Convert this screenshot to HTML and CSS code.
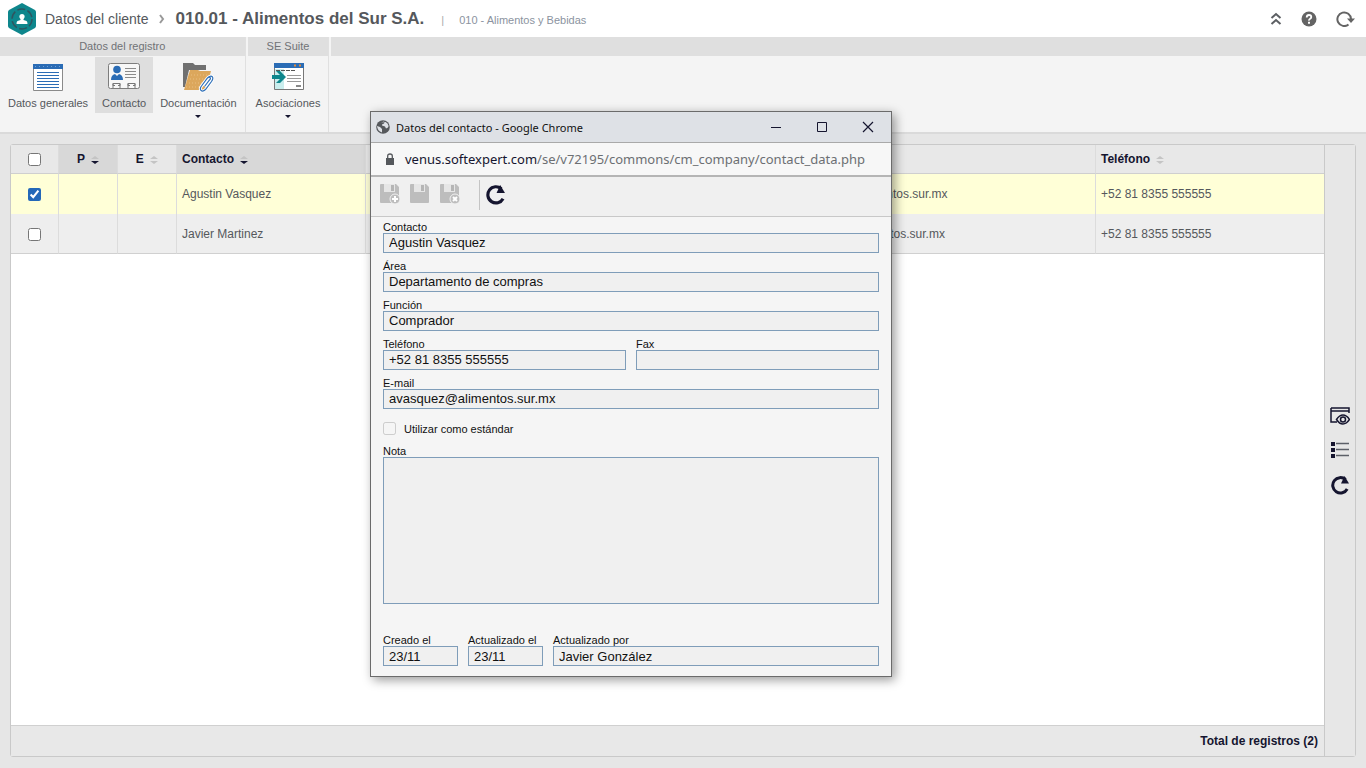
FILE: index.html
```html
<!DOCTYPE html>
<html lang="es">
<head>
    <meta charset="UTF-8">
    <meta name="viewport" content="width=device-width, initial-scale=1.0">
    <title>Datos del cliente</title>
    <link rel="stylesheet" href="styles.css">
</head>
<body>
    <svg class="symbols" aria-hidden="true">
        <symbol id="reload" viewBox="0 0 20 20">
            <path d="M15.6 4.600A7.700 7.700 0 1 0 17.200 14" fill="none" stroke="currentColor" stroke-width="3"/>
            <path d="M14.500 1l4.500 7.600h-8z" fill="currentColor"/>
        </symbol>
        <symbol id="sort" viewBox="0 0 8 8">
            <path d="M4 0l4 3H0z" fill="#c4c4c4"/>
            <path d="M0 5h8L4 8z" fill="currentColor"/>
        </symbol>
        <symbol id="floppy" viewBox="0 0 20 20">
            <path d="M1 0h15l3 3v15q0 1-1 1H1q-1 0-1-1V1q0-1 1-1z" fill="#bdbdbd"/>
            <path d="M4 0h11v8H4z" fill="#e6e6e6"/>
            <path d="M11 1h3v6h-3z" fill="#b5b5b5"/>
        </symbol>
    </svg>
    <div class="page">
        <header class="topbar">
            <svg class="logo" viewBox="0 0 30 34">
                <path d="M15 1l13 7q1 1 1 2v14q0 1-1 2l-13 7-13-7q-1-1-1-2V10q0-1 1-2z" fill="#0e868c"/>
                <circle cx="15" cy="17" r="10" fill="none" stroke="#2f5560" stroke-width="1.5" stroke-dasharray="8 2.5"/>
                <circle cx="15" cy="14.500" r="2.600" fill="#fff"/>
                <path d="M13.500 16h3v2l3 1q1 .5 1 3h-11q0-2.500 1-3l3-1z" fill="#fff"/>
            </svg>
            <span class="crumb">Datos del cliente</span>
            <svg class="arrow" viewBox="0 0 6 10"><path d="M1 1l3 4-3 4" fill="none" stroke="#999" stroke-width="2"/></svg>
            <h1>010.01 - Alimentos del Sur S.A.</h1>
            <span class="sep">|</span>
            <span class="category">010 - Alimentos y Bebidas</span>
            <div class="tools">
                <button type="button" aria-label="Contraer">
                    <svg width="12" height="14" viewBox="0 0 12 14"><path d="M1.500 6L6 2l4.500 4M1.500 12L6 8l4.500 4" fill="none" stroke="#5c5f63" stroke-width="2"/></svg>
                </button>
                <button type="button" aria-label="Ayuda">
                    <svg width="16" height="16" viewBox="0 0 16 16"><circle cx="8" cy="8" r="7.500" fill="#646464"/><path d="M5.700 6.500q0-2.500 2.300-2.500t2.300 2.100q0 1-1.200 1.700T8 9.600" fill="none" stroke="#fff" stroke-width="1.800"/><path d="M7 10.700h2v2H7z" fill="#fff"/></svg>
                </button>
                <button type="button" aria-label="Actualizar">
                    <svg width="19" height="16" viewBox="0 0 19 16"><path d="M12.500 13.500A6.800 6.800 0 1 1 15 8" fill="none" stroke="#646464" stroke-width="2"/><path d="M11 7.500h8l-4 4.500z" fill="#646464"/></svg>
                </button>
            </div>
        </header>

        <nav class="ribbon">
            <section class="group">
                <h2>Datos del registro</h2>
                <div class="items">
                    <button type="button" class="item">
                        <svg viewBox="0 0 32 32"><path d="M1.500 3.500h29v26h-29z" fill="#fff" stroke="#8a8a8a"/><path d="M1 3h30v5H1z" fill="#2a6cb5"/><path d="M3 5.500h26" stroke="#6fa0d6" stroke-dasharray="1 3"/><path d="M5 11.500h22M5 14.500h22M5 17.500h22M5 20.500h22M5 23.500h22M5 26.500h22" stroke="#2a6cb5"/></svg>
                        <span>Datos generales</span>
                    </button>
                    <button type="button" class="item active">
                        <svg viewBox="0 0 32 32"><path d="M2.500 2.500h27q2 0 2 2v21q0 2-2 2h-27q-2 0-2-2v-21q0-2 2-2z" fill="#f7f7f7" stroke="#7d7d7d"/><circle cx="9" cy="8.500" r="3.800" fill="#2a6cb5"/><path d="M3 19q0-5 4-6l2 2 2-2q4 1 4 6z" fill="#2a6cb5"/><path d="M17 7.500h11M17 10.500h11M17 13.500h11M17 16.500h11" stroke="#8a8a8a"/><path d="M5 27.500v-5h7v5M20 27.500v-5h7v5M5 22.500v2h2M12 22.500v2h-2M20 22.500v2h2M27 22.500v2h-2" fill="none" stroke="#777"/></svg>
                        <span>Contacto</span>
                    </button>
                    <button type="button" class="item">
                        <svg viewBox="0 0 32 32"><path d="M1 2h10l2 2h11v5H7L3 26H1z" fill="#707070"/><path d="M8 9h8l2 1h11l-5 19H2z" fill="#dca75c"/><path d="M6 14h20M5 18h18M4 22h18M4 26h17" stroke="#e9be80" stroke-dasharray="1 2"/><path d="M19.500 25l6-8q3-3 5-1 1 1.500-1 4.500l-6 8q-2.500 2.500-4.500 1-1.500-2 .5-4.500l6-8q1.500-1.500 2.500-.5t-.5 2.500l-5 6.500" fill="none" stroke="#fff" stroke-width="3"/><path d="M19.500 25l6-8q3-3 5-1 1 1.500-1 4.500l-6 8q-2.500 2.500-4.500 1-1.500-2 .5-4.500l6-8q1.500-1.500 2.500-.5t-.5 2.500l-5 6.500" fill="none" stroke="#2f70b8" stroke-width="1.200"/></svg>
                        <span>Documentación</span>
                        <i class="caret"></i>
                    </button>
                </div>
            </section>
            <section class="group">
                <h2>SE Suite</h2>
                <div class="items">
                    <button type="button" class="item">
                        <svg viewBox="0 0 32 32"><path d="M2.500 2.500h29v26h-29z" fill="#fff" stroke="#777"/><path d="M3 8h9v20H3z" fill="#c9eded"/><path d="M2 2h30v5H2z" fill="#2a6cb5"/><path d="M22 4.500h2M27 4.500h2" stroke="#e08a3c" stroke-width="2"/><path d="M4 9.500h19" stroke="#555" stroke-dasharray="4 1"/><path d="M15 14.500h14M15 17.500h14M15 20.500h14" stroke="#999"/><path d="M24 25h5" stroke="#888" stroke-width="2"/><path d="M0 14h8l-4-4h4l6 6-6 6H4l4-4H0z" fill="#0e868c"/></svg>
                        <span>Asociaciones</span>
                        <i class="caret"></i>
                    </button>
                </div>
            </section>
            <div class="rest"></div>
        </nav>

        <main class="panel">
            <div class="grid">
                <table>
                    <colgroup>
                        <col class="col-check">
                        <col class="col-flag">
                        <col class="col-flag">
                        <col class="col-name">
                        <col class="col-area">
                        <col>
                        <col class="col-phone">
                    </colgroup>
                    <thead>
                        <tr>
                            <th class="center"><input type="checkbox" aria-label="Seleccionar todos"></th>
                            <th class="center sorted">P <svg class="sort"><use href="#sort"/></svg></th>
                            <th class="center">E <svg class="sort"><use href="#sort"/></svg></th>
                            <th class="sorted">Contacto <svg class="sort"><use href="#sort"/></svg></th>
                            <th></th>
                            <th></th>
                            <th>Teléfono <svg class="sort"><use href="#sort"/></svg></th>
                        </tr>
                    </thead>
                    <tbody>
                        <tr class="selected">
                            <td class="center"><input type="checkbox" aria-label="Agustin Vasquez" checked></td>
                            <td></td>
                            <td></td>
                            <td>Agustin Vasquez</td>
                            <td></td>
                            <td>avasquez@alimentos.sur.mx</td>
                            <td>+52 81 8355 555555</td>
                        </tr>
                        <tr>
                            <td class="center"><input type="checkbox" aria-label="Javier Martinez"></td>
                            <td></td>
                            <td></td>
                            <td>Javier Martinez</td>
                            <td></td>
                            <td>jmartinez@alimentos.sur.mx</td>
                            <td>+52 81 8355 555555</td>
                        </tr>
                    </tbody>
                </table>
                <div class="total">Total de registros (2)</div>
            </div>
            <aside class="side">
                <button type="button" aria-label="Ver">
                    <svg width="20" height="18" viewBox="0 0 20 18"><path d="M1 1h18v5M1 1v14h6" fill="none" stroke="#15152f" stroke-width="1.500"/><path d="M1 4h18" stroke="#15152f" stroke-width="1.500"/><path d="M6.500 12.500q3-4.500 6.500-4.500t6.500 4.500q-3 4.500-6.500 4.500t-6.500-4.500z" fill="#e7e7e7" stroke="#15152f" stroke-width="1.500"/><circle cx="13" cy="12.500" r="2.500" fill="none" stroke="#15152f" stroke-width="1.500"/></svg>
                </button>
                <button type="button" aria-label="Lista">
                    <svg width="20" height="18" viewBox="0 0 20 18"><path d="M1 1h4v4H1zM1 7h4v4H1zM1 13h4v4H1z" fill="#15152f"/><path d="M6 2.500h13M6 8.500h13M6 14.500h13" stroke="#5c6068" stroke-width="1.500"/></svg>
                </button>
                <button type="button" aria-label="Actualizar lista">
                    <svg width="20" height="20"><use href="#reload"/></svg>
                </button>
            </aside>
        </main>
    </div>

    <!-- ventana del contacto -->
    <div class="window" role="dialog" aria-labelledby="win-title">
        <div class="titlebar">
            <svg width="14" height="14" viewBox="0 0 14 14"><circle cx="7" cy="7" r="6.800" fill="#55585c"/><path d="M1 6l3 1 2 2v3.500Q1.500 11 1 6zM5 2.500l3-1q1 1 0 2l-2 1v1l3 1 1 2 2-1q1-2-.5-4l-2-1.500" fill="#dee1e6"/></svg>
            <span id="win-title">Datos del contacto - Google Chrome</span>
            <button type="button" aria-label="Minimizar"><svg width="12" height="12"><path d="M1 6.500h10" stroke="#15152f"/></svg></button>
            <button type="button" aria-label="Maximizar"><svg width="12" height="12"><path d="M1.500 1.500h9v9h-9z" fill="none" stroke="#15152f"/></svg></button>
            <button type="button" aria-label="Cerrar"><svg width="12" height="12"><path d="M1 1l10 10M11 1L1 11" stroke="#15152f" stroke-width="1.200"/></svg></button>
        </div>
        <div class="address">
            <svg width="10" height="12" viewBox="0 0 10 12"><path d="M1 5h8v7H1z" fill="#55585c"/><path d="M2.700 5V3q0-2 2.300-2t2.300 2v2" fill="none" stroke="#55585c" stroke-width="1.300"/></svg>
            <span><b>venus.softexpert.com</b>/se/v72195/commons/cm_company/contact_data.php</span>
        </div>
        <div class="actions">
            <button type="button" aria-label="Guardar y nuevo" disabled>
                <svg width="21" height="21" viewBox="0 0 21 21"><use href="#floppy" width="20" height="20"/><circle cx="15" cy="15" r="5" fill="#bdbdbd" stroke="#f1f1f1"/><path d="M12 15h6M15 12v6" stroke="#fff" stroke-width="2"/></svg>
            </button>
            <button type="button" aria-label="Guardar" disabled>
                <svg width="21" height="21" viewBox="0 0 21 21"><use href="#floppy" width="20" height="20"/></svg>
            </button>
            <button type="button" aria-label="Guardar y salir" disabled>
                <svg width="21" height="21" viewBox="0 0 21 21"><use href="#floppy" width="20" height="20"/><circle cx="15" cy="15" r="5" fill="#bdbdbd" stroke="#f1f1f1"/><path d="M13 13l4 4M17 13l-4 4" stroke="#fff" stroke-width="2"/></svg>
            </button>
            <span class="divider"></span>
            <button type="button" aria-label="Recargar">
                <svg width="21" height="21"><use href="#reload"/></svg>
            </button>
        </div>
        <form class="form">
            <div class="field">
                <label for="contacto">Contacto</label>
                <input type="text" id="contacto" value="Agustin Vasquez" readonly>
            </div>
            <div class="field">
                <label for="area">Área</label>
                <input type="text" id="area" value="Departamento de compras" readonly>
            </div>
            <div class="field">
                <label for="funcion">Función</label>
                <input type="text" id="funcion" value="Comprador" readonly>
            </div>
            <div class="row">
                <div class="field">
                    <label for="telefono">Teléfono</label>
                    <input type="text" id="telefono" value="+52 81 8355 555555" readonly>
                </div>
                <div class="field">
                    <label for="fax">Fax</label>
                    <input type="text" id="fax" readonly>
                </div>
            </div>
            <div class="field">
                <label for="email">E-mail</label>
                <input type="text" id="email" value="avasquez@alimentos.sur.mx" readonly>
            </div>
            <div class="check">
                <input type="checkbox" id="estandar" disabled>
                <label for="estandar">Utilizar como estándar</label>
            </div>
            <div class="field">
                <label for="nota">Nota</label>
                <textarea id="nota" readonly></textarea>
            </div>
            <div class="row dates">
                <div class="field">
                    <label for="creado">Creado el</label>
                    <input type="text" id="creado" value="23/11" readonly>
                </div>
                <div class="field">
                    <label for="actualizado">Actualizado el</label>
                    <input type="text" id="actualizado" value="23/11" readonly>
                </div>
                <div class="field wide">
                    <label for="por">Actualizado por</label>
                    <input type="text" id="por" value="Javier González" readonly>
                </div>
            </div>
        </form>
    </div>
</body>
</html>
```
FILE: styles.css
```css
* {
    box-sizing: border-box;
}
body {
    margin: 0;
    font-family: "Liberation Sans", Arial, sans-serif;
    font-size: 12px;
    color: #55585c;
    background-color: #e6e6e6;
}
button {
    font: inherit;
    color: inherit;
    background: none;
    border: none;
    padding: 0;
    cursor: pointer;
}
svg {
    display: block;
}
.symbols {
    display: none;
}
.page {
    min-height: 100vh;
    display: flex;
    flex-direction: column;
}

/* cabecera */
.topbar {
    height: 37px;
    padding: 0 11px 0 7px;
    display: flex;
    align-items: center;
    background-color: #fff;
}
.logo {
    width: 30px;
    height: 34px;
}
.crumb {
    font-size: 14px;
    margin-left: 8px;
}
.arrow {
    width: 6px;
    height: 10px;
    margin: 0 11px 0 10px;
}
.topbar h1 {
    margin: 0;
    font-size: 17px;
}
.sep {
    font-size: 11px;
    color: #aaa;
    margin: 3px 15px 0 17px;
}
.category {
    font-size: 11px;
    color: #8b93a0;
    margin-top: 3px;
}
.tools {
    display: flex;
    align-items: center;
    gap: 19px;
    margin-left: auto;
}

/* barra de opciones */
.ribbon {
    display: flex;
    gap: 2px;
    background-color: #f4f4f4;
    border-bottom: 2px solid #dadada;
}
.group {
    min-height: 95px;
    padding-left: 1px;
    border-right: 1px solid #e0e0e0;
}
.group h2,
.rest::before {
    height: 19px;
    margin: 0 0 0 -1px;
    font-size: 11px;
    line-height: 19px;
    font-weight: normal;
    text-align: center;
    color: #707276;
    background-color: #dfdfdf;
}
.rest {
    flex: 1;
}
.rest::before {
    content: '';
    display: block;
    margin: 0;
}
.items {
    display: flex;
    align-items: flex-start;
    padding: 1px 1px 0 0;
}
.item {
    min-height: 56px;
    padding: 4px 7px 0;
    display: flex;
    flex-direction: column;
    align-items: center;
    font-size: 11px;
    line-height: 14px;
}
.item svg {
    width: 32px;
    height: 32px;
    margin-bottom: 3px;
}
.item.active {
    background-color: #dedede;
}
.caret {
    margin-top: 5px;
    border: 3px solid transparent;
    border-top-color: #15152f;
    border-bottom: 0;
}

/* tabla */
.panel {
    flex: 1;
    margin: 10px 10px 11px;
    display: flex;
    border: 1px solid #c9c9c9;
    border-radius: 3px;
}
.grid {
    flex: 1;
    display: flex;
    flex-direction: column;
    background-color: #fff;
}
table {
    width: 100%;
    table-layout: fixed;
    border-collapse: separate;
    border-spacing: 0;
}
.col-check {
    width: 48px;
}
.col-flag {
    width: 59px;
}
.col-name {
    width: 189px;
}
.col-area {
    width: 423px;
}
.col-phone {
    width: 228px;
}
th,
td {
    padding: 0 5px;
    text-align: left;
    border-right: 1px solid #dcdcdc;
}
th {
    height: 29px;
    color: #15152f;
    background-color: #e8e8e8;
    border-bottom: 1px solid #cfcfcf;
}
th:last-child,
td:last-child {
    border-right: 0;
}
td {
    height: 40px;
    background-color: #eee;
}
tbody tr:last-child td {
    border-bottom: 1px solid #d0d0d0;
}
.selected td {
    background-color: #ffffd7;
}
.center {
    text-align: center;
}
.sort {
    display: inline-block;
    width: 8px;
    height: 8px;
    margin-left: 3px;
    vertical-align: -1px;
    color: #c4c4c4;
}
.sorted {
    background-color: #d8d8d8;
}
.sorted .sort {
    color: #15152f;
}
input[type="checkbox"] {
    width: 13px;
    height: 13px;
    margin: 0;
    vertical-align: middle;
    accent-color: #2468b8;
}
.total {
    margin-top: auto;
    height: 31px;
    padding-right: 6px;
    line-height: 30px;
    font-weight: bold;
    text-align: right;
    color: #15152f;
    background-color: #e8e8e8;
    border-top: 1px solid #d0d0d0;
}
.side {
    width: 31px;
    display: flex;
    flex-direction: column;
    align-items: center;
    justify-content: center;
    gap: 16px;
    color: #15152f;
    background-color: #e7e7e7;
    border-left: 1px solid #c9c9c9;
}

/* ventana */
.window {
    position: absolute;
    left: 370px;
    top: 111px;
    width: 522px;
    color: #111;
    background-color: #f5f5f5;
    border: 1px solid #6b6b6b;
    box-shadow: 3px 3px 10px rgba(0, 0, 0, 0.4);
}
.titlebar {
    height: 31px;
    padding: 0 17px 0 5px;
    display: flex;
    align-items: center;
    font-family: "Noto Sans", "Open Sans", sans-serif;
    font-size: 11px;
    background-color: #dee1e6;
    border-bottom: 1px solid #a9a9a9;
}
.titlebar span {
    flex: 1;
    margin-left: 6px;
}
.titlebar button {
    margin-left: 34px;
}
.address {
    height: 34px;
    padding: 0 14px;
    display: flex;
    align-items: center;
    gap: 10px;
    font-family: "Noto Sans", "Open Sans", sans-serif;
    font-size: 13px;
    color: #6c6f73;
    background-color: #f7f7f7;
    border-bottom: 2px solid #b5b5b5;
}
.address b {
    font-weight: normal;
    color: #15152f;
}
.actions {
    height: 40px;
    padding: 0 9px 4px;
    display: flex;
    align-items: center;
    gap: 9px;
    color: #15152f;
    background-color: #f0f0f0;
    border-bottom: 1px solid #c8c8c8;
}
.divider {
    width: 1px;
    height: 30px;
    margin: 0 -4px 0 9px;
    background-color: #c4c4c4;
}
.form {
    padding: 4px 12px 10px;
    display: flex;
    flex-direction: column;
    gap: 7px;
    font-size: 11px;
}
.field {
    flex: 1;
    display: flex;
    flex-direction: column;
}
.field label {
    line-height: 12px;
}
.field input,
.field textarea {
    width: 100%;
    height: 20px;
    margin: 0;
    padding: 0 5px 2px;
    font-family: inherit;
    font-size: 13px;
    color: #111;
    background-color: #f0f0f0;
    border: 1px solid #7f9db9;
    border-radius: 0;
    outline: none;
}
.field textarea {
    height: 147px;
    resize: none;
}
.row {
    display: flex;
    gap: 10px;
}
.check {
    display: flex;
    align-items: center;
    gap: 8px;
    padding: 6px 0 3px;
}
.dates {
    margin-top: 23px;
}
.dates .field {
    flex: 0 0 75px;
}
.dates .field input {
    padding-bottom: 0;
}
.dates .wide {
    flex: 1;
}
```
